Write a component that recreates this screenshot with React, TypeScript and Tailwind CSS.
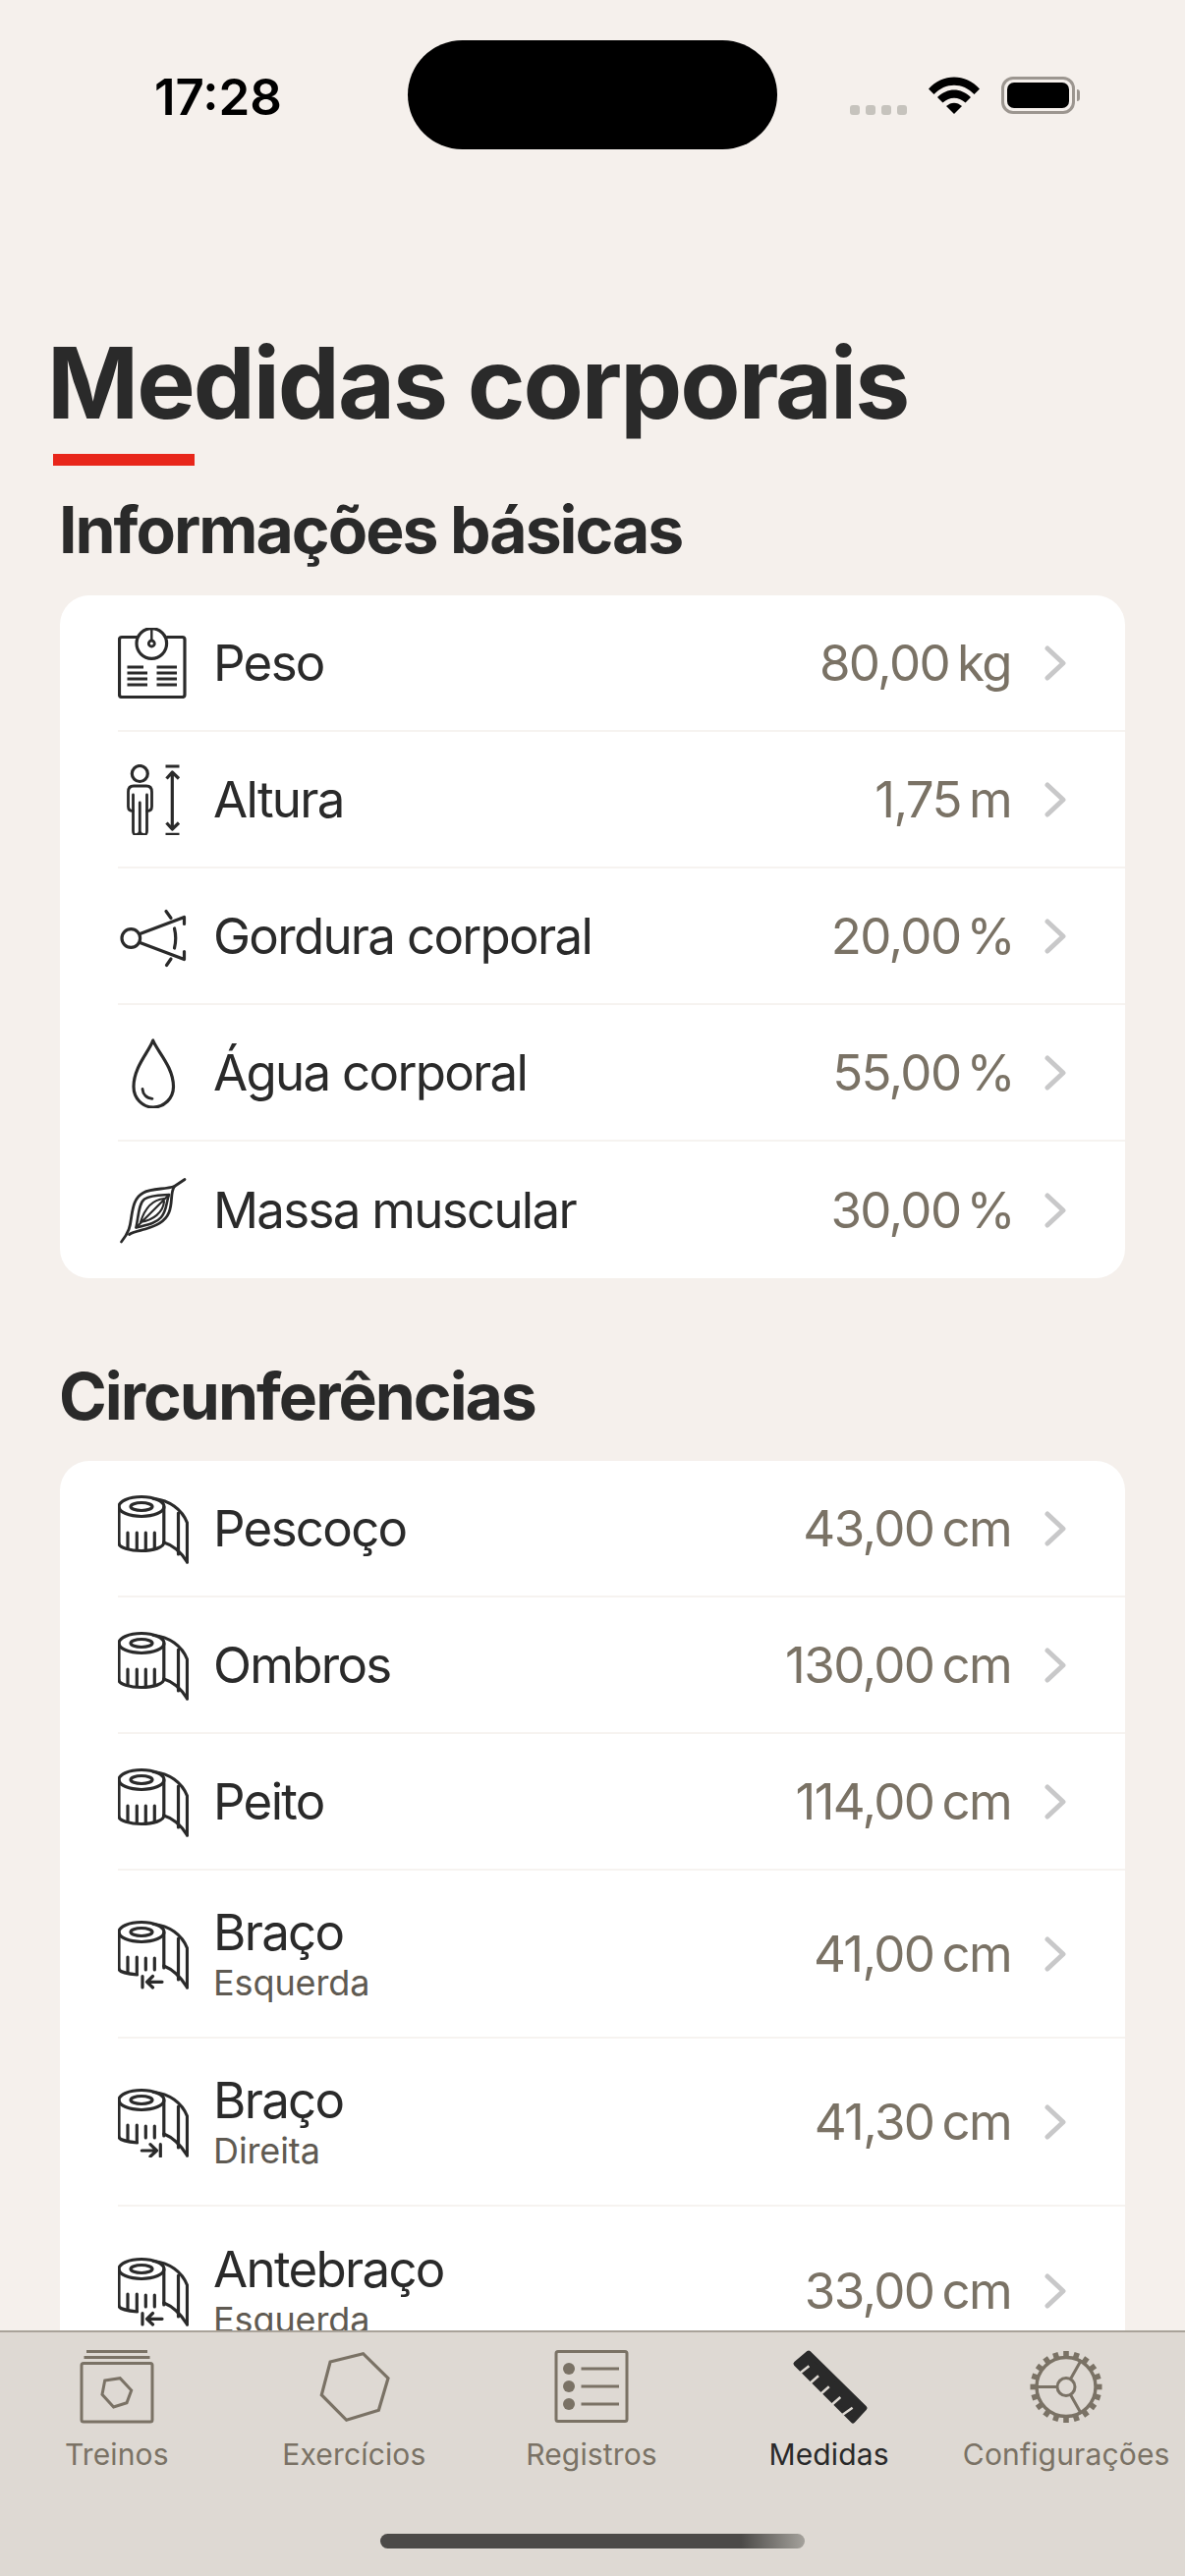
import type { ReactNode } from 'react'

const tapeTop = (
  <>
    <ellipse cx="24" cy="13.5" rx="23" ry="10" />
    <ellipse cx="24" cy="13.5" rx="11" ry="4" />
    <path d="M36 5.5C52 7 65 16 70.5 30V70" />
    <path d="M61.5 20V62" />
    <path d="M1 14V51" />
    <path d="M46.8 14V50" />
  </>
)

function TapeIcon() {
  return (
    <IconBox>
      {tapeTop}
      <path d="M1 51C1 55 12 58.5 24 58.5S46.8 55 46.8 50" />
      <path d="M46.8 50C57 53 65 61 70.5 70" />
      <path d="M10 40V55.5M19.3 40V57.5M28.3 40V57.5M37.3 40V55.5" />
    </IconBox>
  )
}

function TapeArrowIcon({ side }: { side: 'left' | 'right' }) {
  return (
    <IconBox>
      {tapeTop}
      <path d="M1 51C1 53 7 56 19.5 57" />
      <path d="M46.8 48C57 52 65 61 70.5 70" />
      <path d="M10 39V55M19.3 39V56M28.3 40V52M37.3 40V52" />
      {side === 'left' ? (
        <path d="M25 58.5V70M45 64.3H29.5M35.5 58.5L29.5 64.3L35.5 70" />
      ) : (
        <path d="M43.3 58.7V71M24.3 65H39M33 58.7L39.5 65L33 71" />
      )}
    </IconBox>
  )
}

function IconBox({ children }: { children: ReactNode }) {
  return (
    <svg viewBox="0 0 72 72" className="h-[72px] w-[72px] shrink-0" fill="none" stroke="#2a2a2a" strokeWidth="3.2" strokeLinecap="round" strokeLinejoin="round">
      {children}
    </svg>
  )
}

function ScaleIcon() {
  return (
    <IconBox>
      <path d="M19 9.5H4Q1.5 9.5 1.5 12V68Q1.5 70.5 4 70.5H65.5Q68 70.5 68 68V12Q68 9.5 65.5 9.5H50" />
      <circle cx="34.3" cy="16" r="15.3" />
      <circle cx="34.3" cy="16" r="3" strokeWidth="2.8" />
      <path d="M34.3 1V12" strokeWidth="2.4" />
      <path d="M9.5 40H26M9.5 46H30M9.5 52H30M9.5 58H30M39.5 40H60M39.5 46H60M39.5 52H60M39.5 58H60" strokeWidth="2.8" strokeLinecap="butt" />
    </IconBox>
  )
}

function HeightIcon() {
  return (
    <IconBox>
      <circle cx="22.3" cy="9.5" r="8" />
      <path d="M15.5 31V68Q15.5 72 19 71.5Q22.3 71.5 22.3 68V39V68Q22.3 71.5 26 71.5Q29.5 72 29.5 68V31" strokeWidth="2.8" />
      <path d="M15.5 47.5Q10.5 47.5 10.5 43V28Q10.5 22 16 22H29Q34.5 22 34.5 28V43Q34.5 47.5 29.5 47.5" strokeWidth="2.8" />
      <path d="M48.5 2H62.5M48.5 71.3H62.5M55.3 8V66M49.5 14.5L55.3 8L62 14.5M49.5 59.5L55.3 66L62 59.5" strokeLinecap="butt" />
    </IconBox>
  )
}

function CaliperIcon() {
  return (
    <IconBox>
      <circle cx="13.3" cy="38" r="9.3" />
      <path d="M22.5 33.5L67.5 16.5V23.5M22.5 42.5L67.5 59.5V51.5" />
      <path d="M57.5 28Q60 38 57.5 48M49 10.5L54 17.5M54 59L49.5 65.5" />
    </IconBox>
  )
}

function DropIcon() {
  return (
    <IconBox>
      <path d="M35.7 3C32 14 16 30 16 50C16 62 25 71 36 71C47 71 56.5 62 56.5 50C56.5 30 40 14 35.7 3Z" />
      <path d="M25 52.5C25.5 58 29 62 35 62.3" strokeWidth="2.8" />
    </IconBox>
  )
}

function MuscleIcon() {
  return (
    <IconBox>
      <path d="M68 4.5L57.5 11.5C48 15 35 13 26 18C16 23 15 35 13.5 44C12.5 52 11.5 58 3.5 68" strokeWidth="2.8" />
      <path d="M57.5 11.5C53 18 56 28 52 38C48 48 38 52 28 55C21 57 15 58 11.5 60.5" strokeWidth="2.8" />
      <path d="M52 20C44 20.5 34 20 27 24.5C21 29 21 42 18.5 53.5C28 51 38 50 44 43C50 36 49 28 52 20Z" strokeWidth="2.6" />
      <path d="M52 20L18.5 53.5M47 24C36 25 28 32 23 48M47 27C46 38 36 46 23 48" strokeWidth="2.2" />
    </IconBox>
  )
}

function Chevron() {
  return (
    <svg viewBox="0 0 22 36" className="ml-[34px] mr-[1px] h-9 w-[22px] shrink-0" fill="none" stroke="#c8c8c9" strokeWidth="5" strokeLinecap="round" strokeLinejoin="round">
      <path d="M3 3L19 18L3 33" />
    </svg>
  )
}

type Measure = {
  label: string
  sub?: string
  value: string
  unit: string
  icon: ReactNode
}

const basics: Measure[] = [
  { label: 'Peso', value: '80,00', unit: 'kg', icon: <ScaleIcon /> },
  { label: 'Altura', value: '1,75', unit: 'm', icon: <HeightIcon /> },
  { label: 'Gordura corporal', value: '20,00', unit: '%', icon: <CaliperIcon /> },
  { label: 'Água corporal', value: '55,00', unit: '%', icon: <DropIcon /> },
  { label: 'Massa muscular', value: '30,00', unit: '%', icon: <MuscleIcon /> },
]

const circumferences: Measure[] = [
  { label: 'Pescoço', value: '43,00', unit: 'cm', icon: <TapeIcon /> },
  { label: 'Ombros', value: '130,00', unit: 'cm', icon: <TapeIcon /> },
  { label: 'Peito', value: '114,00', unit: 'cm', icon: <TapeIcon /> },
  { label: 'Braço', sub: 'Esquerda', value: '41,00', unit: 'cm', icon: <TapeArrowIcon side="left" /> },
  { label: 'Braço', sub: 'Direita', value: '41,30', unit: 'cm', icon: <TapeArrowIcon side="right" /> },
  { label: 'Antebraço', sub: 'Esquerda', value: '33,00', unit: 'cm', icon: <TapeArrowIcon side="left" /> },
]

function MeasureRow({ item, last }: { item: Measure; last: boolean }) {
  return (
    <div className={`ml-[59px] flex items-center pr-[59px] ${item.sub ? 'h-[171px]' : 'h-[139px]'} ${last ? '' : 'border-b-2 border-[#f6f3f0]'}`}>
      {item.icon}
      <div className="ml-[25px] flex min-w-0 flex-1 flex-col">
        <span className={`text-[51px] tracking-[-1.7px] text-[#2a2a2a] ${item.sub ? 'leading-[56px]' : 'leading-[60px]'}`}>{item.label}</span>
        {item.sub && <span className="mt-[3px] text-[36px] leading-[40px] tracking-[-0.1px] text-[#5f5a52]">{item.sub}</span>}
      </div>
      <span className="text-[51px] leading-[60px] tracking-[-1.6px] text-[#7a7265]">
        {item.value}
        <span className={item.unit === '%' ? 'ml-[6px] -mr-[3px]' : 'ml-[8px]'}>{item.unit}</span>
      </span>
      <Chevron />
    </div>
  )
}

function TreinosIcon() {
  return (
    <svg viewBox="0 0 80 80" className="h-20 w-20" fill="none" stroke="#7a7265" strokeWidth="3">
      <path d="M9 3.5H71M6.5 9.5H73.5" />
      <rect x="4" y="15.5" width="72" height="59.5" rx="2" />
      <path d="M27.7 33L43.2 30.7L54.7 43L50 55.7L36.6 60L25 47.3Z" />
    </svg>
  )
}

function ExerciciosIcon() {
  return (
    <svg viewBox="0 0 80 80" className="h-20 w-20" fill="none" stroke="#7a7265" strokeWidth="3.2">
      <path d="M16.1 14L49.6 5.7L75 30.7L65.4 63.3L32.6 73.3L7.3 47.7Z" />
    </svg>
  )
}

function RegistrosIcon() {
  return (
    <svg viewBox="0 0 80 80" className="h-20 w-20" fill="none" stroke="#7a7265" strokeWidth="3">
      <rect x="4" y="3.5" width="72" height="71" rx="2" />
      <path d="M29.5 21H68M29.5 39H68M29.5 57H68" />
      <circle cx="17" cy="21" r="6" fill="#7a7265" stroke="none" />
      <circle cx="17" cy="39" r="6" fill="#7a7265" stroke="none" />
      <circle cx="17" cy="57" r="6" fill="#7a7265" stroke="none" />
    </svg>
  )
}

function MedidasIcon() {
  return (
    <svg viewBox="0 0 80 80" className="h-20 w-20">
      <path d="M19 5L6 16L64 74L76 61Z" fill="#2a2a2a" stroke="#2a2a2a" strokeWidth="5" strokeLinejoin="round" />
      <path d="M9.5 26L19.4 18.3M20.2 36L29 28.3M31 47L39.8 39.3M42.5 57.7L51.3 50M53.7 67.7L63.6 60.7" stroke="#ded9d3" strokeWidth="2.5" fill="none" />
    </svg>
  )
}

function ConfigIcon() {
  const teeth = Array.from({ length: 20 }, (_, i) => i * 18)
  return (
    <svg viewBox="0 0 80 80" className="h-20 w-20" fill="none" stroke="#7a7265" strokeWidth="3">
      <circle cx="40" cy="39.5" r="30" strokeWidth="3.4" />
      {teeth.map((deg) => (
        <rect key={deg} x="37.2" y="3" width="5.6" height="7" fill="#7a7265" stroke="none" transform={`rotate(${deg} 40 39.5)`} />
      ))}
      <circle cx="40" cy="39.5" r="9" />
      <path d="M31 39.5H11M44.5 31.5L55.5 12M44.5 47.5L55.5 67" />
    </svg>
  )
}

const tabs = [
  { label: 'Treinos', icon: <TreinosIcon /> },
  { label: 'Exercícios', icon: <ExerciciosIcon /> },
  { label: 'Registros', icon: <RegistrosIcon /> },
  { label: 'Medidas', icon: <MedidasIcon />, active: true },
  { label: 'Configurações', icon: <ConfigIcon /> },
]

function StatusBar() {
  return (
    <div className="flex items-start pt-[41px]">
      <div className="w-[415px] pl-[157px] pt-[30px] text-[51px] font-semibold leading-[56px] text-black">17:28</div>
      <div className="h-[111px] w-[376px] rounded-[56px] bg-black" />
      <div className="ml-[74px] flex items-start pt-[37px]">
        <div className="mt-[29px] flex gap-[6px]">
          <span className="h-[10px] w-[10px] rounded-[3px] bg-[#c6c3bd]" />
          <span className="h-[10px] w-[10px] rounded-[3px] bg-[#c6c3bd]" />
          <span className="h-[10px] w-[10px] rounded-[3px] bg-[#c6c3bd]" />
          <span className="h-[10px] w-[10px] rounded-[3px] bg-[#c6c3bd]" />
        </div>
        <svg viewBox="0 0 52 38" className="ml-[22px] h-[38px] w-[52px]" fill="black">
          <path d="M0 12.5C14 -3.5 38 -3.5 52 12.5L46.5 18C35 5.5 17 5.5 5.5 18Z" />
          <path d="M9 21C19 11 33 11 43 21L37.5 26.5C30.5 20 21.5 20 14.5 26.5Z" />
          <path d="M18 30C23 25.5 29 25.5 34 30L26 38Z" />
        </svg>
        <div className="ml-[22px] flex items-center">
          <div className="h-[38px] w-[75px] rounded-[12px] border-[3px] border-[#9c9690] p-[3px]">
            <div className="h-full w-full rounded-[7px] bg-black" />
          </div>
          <div className="ml-[2px] h-[12px] w-[3px] rounded-r-full bg-[#9c9690]" />
        </div>
      </div>
    </div>
  )
}

export default function App() {
  return (
    <div className="flex h-[2622px] w-[1206px] flex-col overflow-hidden bg-[#f5f0ec]" style={{ fontFamily: 'Inter, sans-serif' }}>
      <main className="min-h-0 flex-1 overflow-hidden">
        <StatusBar />
        <h1 className="ml-[48px] mt-[178px] text-[100px] font-bold leading-[120px] tracking-[-2px] text-[#2a2a2a]">Medidas corporais</h1>
        <div className="ml-[54px] mt-[12px] h-3 w-[144px] bg-[#e8261a]" />
        <section className="mx-[61px]">
          <h2 className="-ml-px mt-[25px] text-[66px] font-bold leading-[80px] tracking-[-2px] text-[#2a2a2a]">Informações básicas</h2>
          <div className="mt-[27px] overflow-hidden rounded-[30px] bg-white">
            {basics.map((item, i) => (
              <MeasureRow key={item.label} item={item} last={i === basics.length - 1} />
            ))}
          </div>
          <h2 className="-ml-px mt-[80px] text-[66px] font-bold leading-[80px] tracking-[-2px] text-[#2a2a2a]">Circunferências</h2>
          <div className="mt-[26px] rounded-[30px] bg-white">
            {circumferences.map((item, i) => (
              <MeasureRow key={item.label + (item.sub ?? '')} item={item} last={i === circumferences.length - 1} />
            ))}
          </div>
        </section>
      </main>
      <nav className="h-[250px] shrink-0 border-t-2 border-[#a9a39a] bg-[#ded9d3]">
        <div className="-ml-[2px] grid w-[1208px] grid-cols-5 pt-4">
          {tabs.map((tab) => (
            <div key={tab.label} className="flex flex-col items-center">
              {tab.icon}
              <span className={`mt-[10px] whitespace-nowrap text-[30px] leading-9 tracking-[0.15px] ${tab.active ? 'text-[#2a2a2a]' : 'text-[#7a7265]'}`}>{tab.label}</span>
            </div>
          ))}
        </div>
        <div className="mx-auto mt-[63px] h-[15px] w-[432px] rounded-full bg-[linear-gradient(90deg,#4c4a48_0%,#4c4a48_85%,#a5a29c_100%)]" />
      </nav>
    </div>
  )
}
